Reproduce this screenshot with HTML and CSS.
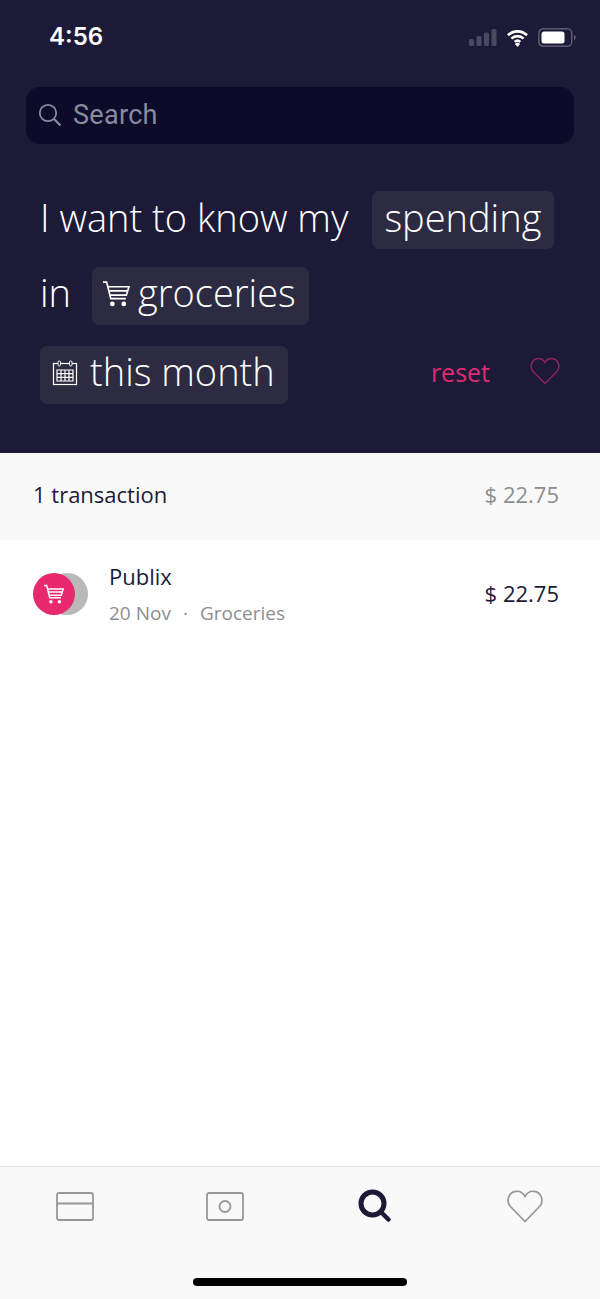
FILE: index.html
```html
<!DOCTYPE html>
<html>
<head>
  <title>Search</title>
  <link rel="stylesheet" href="styles.css">
</head>
<body>
  <div class="app">
    <header class="top">
      <div class="status">
        <span class="time">4:56</span>
        <div class="status-icons">
          <svg width="28" height="17" viewBox="0 0 28 17"><g fill="#4a4961"><rect x="0" y="10" width="5" height="7" rx="1.500"/><rect x="7.500" y="7" width="5" height="10" rx="1.500"/><rect x="15" y="3.500" width="5" height="13.500" rx="1.500"/><rect x="22.500" y="0" width="5" height="17" rx="1.500"/></g></svg>
          <svg width="23" height="18" viewBox="0 0 22 18"><path d="M1.500 6.200a13.600 13.600 0 0 1 19 0M4.900 9.600a8.800 8.800 0 0 1 12.200 0M8.200 12.900a4.200 4.200 0 0 1 5.600 0" fill="none" stroke="#fff" stroke-width="2.600"/><path d="M11 18l-2.600-3a3.600 3.600 0 0 1 5.200 0z" fill="#fff"/></svg>
          <svg width="38" height="19" viewBox="0 0 38 19"><rect x="0.800" y="0.800" width="33" height="17.400" rx="4.500" fill="none" stroke="#5c5b72" stroke-width="1.500"/><rect x="3.500" y="3.500" width="23" height="12" rx="2.500" fill="#fff"/><path d="M36 7c1.300.4 1.800 1.400 1.800 2.500S37.300 11.600 36 12z" fill="#5c5b72"/></svg>
        </div>
      </div>

      <div class="search">
        <svg width="24" height="24" viewBox="0 0 24 24"><circle cx="10" cy="10" r="8.200" fill="none" stroke="#8b8a9c" stroke-width="1.800"/><path d="M16 16l6.500 6.500" stroke="#8b8a9c" stroke-width="2.200" fill="none"/></svg>
        <span>Search</span>
      </div>

      <div class="query">
        <div class="line line-one">
          <span class="words">I want to know my</span>
          <span class="chip chip-spending">spending</span>
        </div>
        <div class="line line-two">
          <span class="words">in</span>
          <span class="chip chip-groceries">
            <svg width="27" height="27" viewBox="0 0 26 26"><path d="M0 2h3.500l4 16h14.500M5.500 6.500H25l-2.500 8H7M6.500 10.500H24" fill="none" stroke="#fff" stroke-width="1.600"/><circle cx="9" cy="23" r="2.300" fill="#fff"/><circle cx="20" cy="23" r="2.300" fill="#fff"/></svg>
            groceries
          </span>
        </div>
        <div class="line line-three">
          <span class="chip chip-month">
            <svg width="26" height="26" viewBox="0 0 26 26"><rect x="1.500" y="3.500" width="23" height="21" fill="none" stroke="#fff" stroke-width="1.200"/><rect x="6" y="1" width="2.500" height="5" rx="1.200" fill="#2c2b41" stroke="#fff"/><rect x="17.500" y="1" width="2.500" height="5" rx="1.200" fill="#2c2b41" stroke="#fff"/><path d="M5 10h16v11H5zM5 13.700h16M5 17.300h16M9 10v11M13 10v11M17 10v11" fill="none" stroke="#fff" stroke-width="1.200"/></svg>
            this month
          </span>
          <span class="reset">reset</span>
          <svg class="heart-pink" width="30" height="28" viewBox="0 0 30 28"><path d="M15 26.500L3 14.500C-.5 10.500 1 2 8 1.500c3-.2 5.500 1.300 7 4 1.500-2.700 4-4.200 7-4 7 .5 8.500 9 5 13z" fill="none" stroke="#8c2558" stroke-width="1.500"/></svg>
        </div>
      </div>
    </header>

    <div class="summary">
      <span>1 transaction</span>
      <span class="summary-total">$ 22.75</span>
    </div>

    <div class="transaction">
      <div class="avatar">
        <span class="avatar-back"></span>
        <span class="avatar-front">
          <svg width="20" height="20" viewBox="0 0 26 26"><path d="M0 2h3.500l4 16h14.500M5.500 6.500H25l-2.500 8H7M6.500 10.500H24" fill="none" stroke="#fff" stroke-width="2"/><circle cx="9" cy="23" r="2.300" fill="#fff"/><circle cx="20" cy="23" r="2.300" fill="#fff"/></svg>
        </span>
      </div>
      <div class="transaction-info">
        <div class="merchant">Publix</div>
        <div class="meta"><span>20 Nov</span><span class="dot">·</span><span>Groceries</span></div>
      </div>
      <div class="amount">$ 22.75</div>
    </div>

    <nav class="tabs">
      <div class="tab tab-card">
        <svg width="38" height="29" viewBox="0 0 38 29"><rect x="1" y="1" width="36" height="27" rx="2" fill="none" stroke="#979797" stroke-width="1.800"/><path d="M1 11.500h36" stroke="#979797" stroke-width="1.800"/></svg>
      </div>
      <div class="tab tab-card">
        <svg width="38" height="29" viewBox="0 0 38 29"><rect x="1" y="1" width="36" height="27" rx="2" fill="none" stroke="#979797" stroke-width="1.800"/><circle cx="19" cy="14.500" r="5.500" fill="none" stroke="#979797" stroke-width="1.800"/></svg>
      </div>
      <div class="tab tab-search">
        <svg width="34" height="34" viewBox="0 0 34 34"><circle cx="14.500" cy="14.500" r="11.500" fill="none" stroke="#1c1a37" stroke-width="5"/><path d="M23.500 23.500l7 7" stroke="#1c1a37" stroke-width="4.500" stroke-linecap="round"/></svg>
      </div>
      <div class="tab tab-heart">
        <svg width="36" height="33" viewBox="0 0 36 33"><path d="M18 31.500L3 16C-1 11 1.500 2 9 1.300c3.800-.3 7.200 1.700 9 5.200 1.800-3.500 5.200-5.500 9-5.200C34.500 2 37 11 33 16z" fill="none" stroke="#979797" stroke-width="1.700"/></svg>
      </div>
      <span class="home-bar"></span>
    </nav>
  </div>
</body>
</html>
```

FILE: styles.css
```css
html, body { margin: 0; padding: 0; }

body {
  background: #fff;
  font-family: "Open Sans", sans-serif;
  color: #1c1a37;
}

.app {
  width: 600px;
  height: 1299px;
  display: flex;
  flex-direction: column;
}

.top {
  height: 453px;
  box-sizing: border-box;
  background: #1c1a37;
  padding: 0 26px;
}

.status {
  height: 87px;
  display: flex;
  justify-content: space-between;
  align-items: flex-start;
  padding: 0 0 0 24px;
}

.time {
  margin-top: 22px;
  margin-left: -1px;
  font: 600 24px/30px Inter, sans-serif;
  color: #fff;
}

.status-icons {
  display: flex;
  align-items: center;
  gap: 9px;
  margin: 28px -2px 0 0;
}

.search {
  height: 57px;
  background: #0d0b2a;
  border-radius: 14px;
  display: flex;
  align-items: center;
  gap: 11px;
  padding: 0 0 2px 12px;
  box-sizing: border-box;
  font: 400 27px Roboto, sans-serif;
  letter-spacing: 0.3px;
  color: #8b8a9c;
}

.query {
  padding-top: 47px;
  color: #fff;
  font-size: 38px;
  font-weight: 300;
}

.line {
  display: flex;
  align-items: center;
  height: 58px;
}

.line-one { padding-left: 14px; }
.line-two { padding-left: 14px; margin-top: 18px; }
.line-three { padding-left: 14px; margin-top: 21px; }

.words { white-space: nowrap; padding-bottom: 7px; }

.chip {
  display: flex;
  align-items: center;
  height: 58px;
  box-sizing: border-box;
  background: #2c2b41;
  border-radius: 7px;
  white-space: nowrap;
  padding-bottom: 7px;
}

.chip svg { margin-top: 4px; flex: none; }

.line-two .words, .line-two .chip, .line-three .chip { padding-bottom: 9px; }

.chip-spending { margin-left: 24px; padding-left: 12px; padding-right: 13px; }
.chip-groceries { margin-left: 21px; padding-left: 11px; padding-right: 13px; gap: 8px; }
.chip-month { padding-left: 12px; padding-right: 13px; gap: 12px; }

.reset {
  margin: 0 40px 6px auto;
  font-size: 25px;
  font-weight: 400;
  color: #df2a72;
}

.heart-pink { margin: 0 14px 9px 0; }

.summary {
  height: 87px;
  box-sizing: border-box;
  background: #f9f9f9;
  display: flex;
  justify-content: space-between;
  align-items: center;
  padding: 0 41px 6px 33px;
  font-size: 22px;
}

.summary-total { color: #8e8e8e; }

.transaction {
  height: 110px;
  display: flex;
  align-items: flex-start;
  padding: 0 41px 0 33px;
}

.avatar {
  position: relative;
  width: 55px;
  height: 42px;
  margin: 33px 21px 0 0;
}

.avatar-back {
  position: absolute;
  left: 13px;
  top: 0;
  width: 42px;
  height: 42px;
  border-radius: 50%;
  background: #b9b9b9;
}

.avatar-front {
  position: absolute;
  left: 0;
  top: 0;
  width: 42px;
  height: 42px;
  border-radius: 50%;
  background: #e8296d;
  display: flex;
  align-items: center;
  justify-content: center;
}

.transaction-info { flex: 1; padding-top: 21px; }

.merchant { font-size: 22px; line-height: 30px; }

.meta {
  margin-top: 9px;
  font-size: 19px;
  line-height: 26px;
  color: #8e8e8e;
}

.dot { margin: 0 12px; }

.amount { margin-top: 38px; font-size: 22px; line-height: 30px; }

.tabs {
  position: relative;
  margin-top: auto;
  height: 133px;
  box-sizing: border-box;
  background: #f9f9f9;
  border-top: 1px solid #e0e0e0;
  display: grid;
  grid-template-columns: repeat(4, 150px);
  grid-template-rows: 78px;
}

.tab {
  display: flex;
  align-items: center;
  justify-content: center;
}

.tab-search svg { margin-top: -1px; }

.home-bar {
  position: absolute;
  left: 193px;
  top: 111px;
  width: 214px;
  height: 8px;
  border-radius: 4px;
  background: #000;
}
```
